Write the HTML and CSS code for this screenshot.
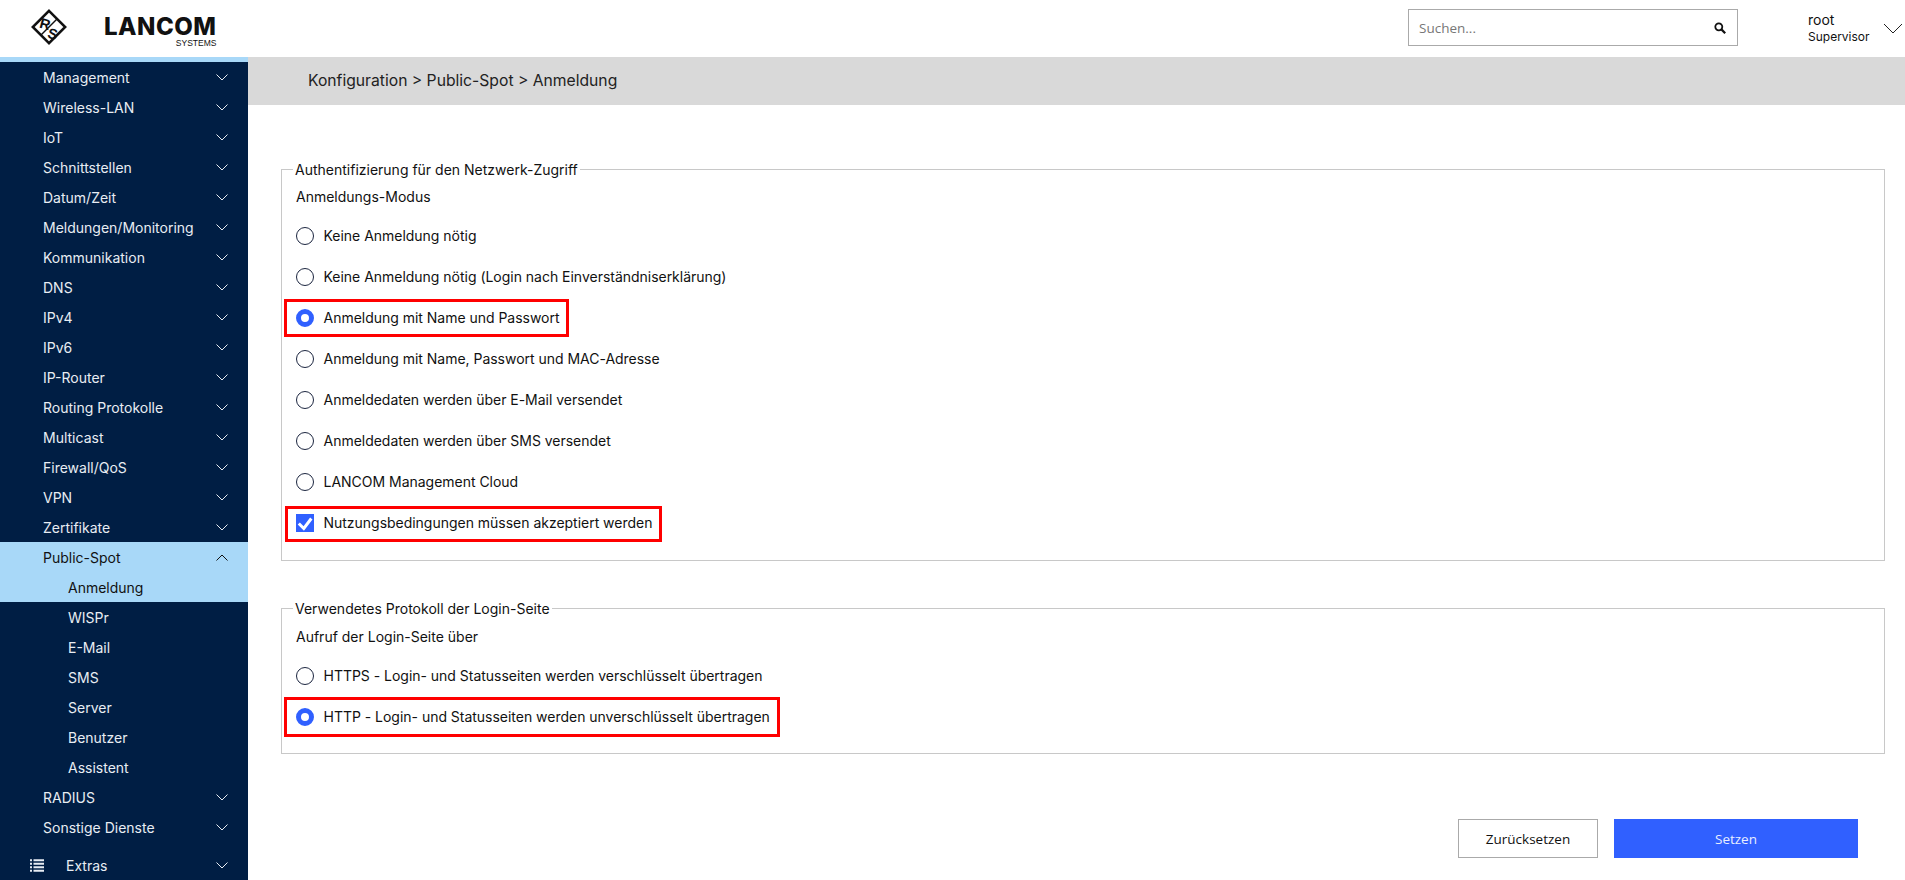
FILE: index.html
```html
<!DOCTYPE html>
<html lang="de">
<head>
<meta charset="utf-8">
<title>Public-Spot Anmeldung</title>
<link rel="stylesheet" href="styles.css">
</head>
<body>
<header class="topbar">
  <div class="brand">
    <svg class="rs-logo" width="38" height="38" viewBox="0 0 38 38"><g fill="none" stroke="#111"><path d="M19 2.800 35.200 19 19 35.200 2.800 19Z" stroke-width="2.500"/><path d="M27.500 10.500 10.500 27.500" stroke-width="1.500"/></g><text x="9.800" y="21" class="rs-letter" transform="rotate(15 15 16)">R</text><text x="18" y="31" class="rs-letter" transform="rotate(15 23 25.500)">S</text></svg>
    <div class="lancom"><span class="lancom-name">LANCOM</span><span class="lancom-sub">SYSTEMS</span></div>
  </div>
  <div class="search"><span class="search-text">Suchen...</span>
    <svg width="12" height="12" viewBox="0 0 12 12"><circle cx="4.800" cy="4.800" r="3.500" fill="none" stroke="#111" stroke-width="1.800"/><path d="M7.400 7.400 11.200 11.200" stroke="#111" stroke-width="2.200"/></svg>
  </div>
  <div class="user">
    <div class="user-text"><div class="user-name">root</div><div class="user-role">Supervisor</div></div>
    <svg width="20" height="11" viewBox="0 0 20 11"><path d="M1 1 10 10 19 1" fill="none" stroke="#222" stroke-width="1"/></svg>
  </div>
</header>
<div class="layout">
  <nav class="sidebar">
    <div class="nav-list">
      <div class="nav-item">Management<svg class="chev" viewBox="0 0 12 7"><path d="M.5.5 6 6 11.500.5"/></svg></div>
      <div class="nav-item">Wireless-LAN<svg class="chev" viewBox="0 0 12 7"><path d="M.5.5 6 6 11.500.5"/></svg></div>
      <div class="nav-item">IoT<svg class="chev" viewBox="0 0 12 7"><path d="M.5.5 6 6 11.500.5"/></svg></div>
      <div class="nav-item">Schnittstellen<svg class="chev" viewBox="0 0 12 7"><path d="M.5.5 6 6 11.500.5"/></svg></div>
      <div class="nav-item">Datum/Zeit<svg class="chev" viewBox="0 0 12 7"><path d="M.5.5 6 6 11.500.5"/></svg></div>
      <div class="nav-item">Meldungen/Monitoring<svg class="chev" viewBox="0 0 12 7"><path d="M.5.5 6 6 11.500.5"/></svg></div>
      <div class="nav-item">Kommunikation<svg class="chev" viewBox="0 0 12 7"><path d="M.5.5 6 6 11.500.5"/></svg></div>
      <div class="nav-item">DNS<svg class="chev" viewBox="0 0 12 7"><path d="M.5.5 6 6 11.500.5"/></svg></div>
      <div class="nav-item">IPv4<svg class="chev" viewBox="0 0 12 7"><path d="M.5.5 6 6 11.500.5"/></svg></div>
      <div class="nav-item">IPv6<svg class="chev" viewBox="0 0 12 7"><path d="M.5.5 6 6 11.500.5"/></svg></div>
      <div class="nav-item">IP-Router<svg class="chev" viewBox="0 0 12 7"><path d="M.5.5 6 6 11.500.5"/></svg></div>
      <div class="nav-item">Routing Protokolle<svg class="chev" viewBox="0 0 12 7"><path d="M.5.5 6 6 11.500.5"/></svg></div>
      <div class="nav-item">Multicast<svg class="chev" viewBox="0 0 12 7"><path d="M.5.5 6 6 11.500.5"/></svg></div>
      <div class="nav-item">Firewall/QoS<svg class="chev" viewBox="0 0 12 7"><path d="M.5.5 6 6 11.500.5"/></svg></div>
      <div class="nav-item">VPN<svg class="chev" viewBox="0 0 12 7"><path d="M.5.5 6 6 11.500.5"/></svg></div>
      <div class="nav-item">Zertifikate<svg class="chev" viewBox="0 0 12 7"><path d="M.5.5 6 6 11.500.5"/></svg></div>
      <div class="nav-item active">Public-Spot<svg class="chev" viewBox="0 0 12 7"><path d="M.5 6.500 6 1 11.500 6.500"/></svg></div>
      <div class="nav-item sub active">Anmeldung</div>
      <div class="nav-item sub">WISPr</div>
      <div class="nav-item sub">E-Mail</div>
      <div class="nav-item sub">SMS</div>
      <div class="nav-item sub">Server</div>
      <div class="nav-item sub">Benutzer</div>
      <div class="nav-item sub">Assistent</div>
      <div class="nav-item">RADIUS<svg class="chev" viewBox="0 0 12 7"><path d="M.5.5 6 6 11.500.5"/></svg></div>
      <div class="nav-item">Sonstige Dienste<svg class="chev" viewBox="0 0 12 7"><path d="M.5.5 6 6 11.500.5"/></svg></div>
    </div>
    <div class="nav-extras">
      <svg class="list-icon" width="14" height="13" viewBox="0 0 14 13"><path d="M0 1.200H2M3.500 1.200H14M0 4.700H2M3.500 4.700H14M0 8.200H2M3.500 8.200H14M0 11.700H2M3.500 11.700H14" stroke="#e8edf3" stroke-width="1.900"/></svg>
      <span class="extras-label">Extras</span><svg class="chev" viewBox="0 0 12 7"><path d="M.5.5 6 6 11.500.5"/></svg>
    </div>
  </nav>
  <main class="content">
    <div class="crumb">Konfiguration &gt; Public-Spot &gt; Anmeldung</div>
    <div class="form">
      <fieldset class="group group-auth">
        <legend>Authentifizierung für den Netzwerk-Zugriff</legend>
        <div class="field-title">Anmeldungs-Modus</div>
        <div class="opt"><span class="radio"></span>Keine Anmeldung nötig</div>
        <div class="opt"><span class="radio"></span>Keine Anmeldung nötig (Login nach Einverständniserklärung)</div>
        <div class="opt"><span class="radio on"></span>Anmeldung mit Name und Passwort<span class="mark mark-a"></span></div>
        <div class="opt"><span class="radio"></span>Anmeldung mit Name, Passwort und MAC-Adresse</div>
        <div class="opt"><span class="radio"></span>Anmeldedaten werden über E-Mail versendet</div>
        <div class="opt"><span class="radio"></span>Anmeldedaten werden über SMS versendet</div>
        <div class="opt"><span class="radio"></span>LANCOM Management Cloud</div>
        <div class="opt"><span class="check"><svg width="18" height="18" viewBox="0 0 18 18"><path d="M2.800 9.500 7.800 14.500 15.300 4.500" fill="none" stroke="#fff" stroke-width="3"/></svg></span>Nutzungsbedingungen müssen akzeptiert werden<span class="mark mark-b"></span></div>
      </fieldset>
      <fieldset class="group group-proto">
        <legend>Verwendetes Protokoll der Login-Seite</legend>
        <div class="field-title">Aufruf der Login-Seite über</div>
        <div class="opt"><span class="radio"></span>HTTPS - Login- und Statusseiten werden verschlüsselt übertragen</div>
        <div class="opt"><span class="radio on"></span>HTTP - Login- und Statusseiten werden unverschlüsselt übertragen<span class="mark mark-c"></span></div>
      </fieldset>
      <div class="actions">
        <button class="btn btn-reset">Zurücksetzen</button>
        <button class="btn btn-set">Setzen</button>
      </div>
    </div>
  </main>
</div>
</body>
</html>
```
FILE: styles.css
```css
* { box-sizing: border-box; }
html, body { margin: 0; height: 100%; overflow: hidden; }
body { font-family: Inter, "Liberation Sans", sans-serif; font-size: 14px; color: #111; background: #fff; }
.topbar { height: 57px; display: flex; align-items: center; }
.brand { width: 248px; display: flex; align-items: center; padding-left: 30px; flex: none; }
.rs-logo { flex: none; margin-top: -3px; }
.rs-letter { font: 700 14.500px "Liberation Sans", sans-serif; fill: #111; }
.lancom { display: flex; flex-direction: column; align-items: flex-end; margin-left: 36px; margin-top: 6px; }
.lancom-name { font: 800 24px/20px Inter, "Liberation Sans", sans-serif; letter-spacing: .5px; color: #111; }
.lancom-sub { font: 400 8.500px/8px "Liberation Sans", sans-serif; color: #111; margin-top: 2px; }
.search { margin-left: 1160px; width: 330px; height: 37px; border: 1px solid #aaa; display: flex; align-items: center; justify-content: space-between; padding: 0 11px 0 10px; margin-top: -2px; }
.search-text { font: 13.500px "Open Sans", sans-serif; color: #777; }
.user { margin-left: 70px; display: flex; align-items: center; gap: 13px; margin-top: -1px; }
.user-name { font-size: 14px; line-height: 17px; }
.user-role { font-size: 12px; line-height: 17px; }
.layout { display: flex; height: 823px; }
.sidebar { width: 248px; flex: none; background: #001e44; border-top: 5px solid #a8d8f8; color: #e8edf3; }
.nav-item { height: 30px; display: flex; align-items: center; justify-content: space-between; padding: 0 20px 0 43px; font-size: 14px; }
.nav-item.sub { padding-left: 68px; }
.nav-item.active { background: #a8d8f8; color: #111; }
.chev { width: 12px; height: 7px; fill: none; stroke: currentColor; stroke-width: 1; }
.nav-extras { display: flex; align-items: center; height: 30px; margin-top: 8px; padding: 0 20px 0 30px; font-size: 14px; }
.extras-label { margin-left: 22px; flex: 1; }
.content { flex: 1; min-width: 0; }
.crumb { height: 48px; background: #d9d9d9; padding: 0 0 2px 60px; display: flex; align-items: center; font-size: 15.700px; color: #222; }
.form { padding: 56px 20px 0 33px; }
.group { position: relative; margin: 0; padding: 0 14px; border: 1px solid #c8c8c8; min-width: 0; }
.group-auth { height: 400px; }
.group-proto { height: 154px; margin-top: 39px; }
legend { padding: 0 2px; margin-left: -3px; font-size: 14px; line-height: 17px; }
.field-title { height: 27px; line-height: 27px; margin-top: 6px; margin-bottom: 5px; }
.group-auth .field-title { margin-top: 5px; }
.opt { position: relative; height: 41px; display: flex; align-items: center; gap: 9.500px; letter-spacing: -.02px; }
.radio { width: 18px; height: 18px; border-radius: 50%; border: 1.500px solid #1c2640; flex: none; }
.radio.on { border: 5px solid #3060ff; background: #fff; }
.check { width: 18px; height: 18px; background: #3060ff; flex: none; display: block; line-height: 0; }
.mark { position: absolute; border: 3px solid #f00; }
.mark-a { left: -12px; top: 2px; width: 285px; height: 38px; }
.mark-b { left: -11px; top: 4px; width: 377px; height: 36px; }
.mark-c { left: -12px; top: 1px; width: 496px; height: 40px; }
.actions { display: flex; justify-content: flex-end; gap: 16px; margin-top: 65px; padding-right: 27px; }
.btn { height: 39px; font: 13.500px "Open Sans", sans-serif; border: 0; padding: 0; }
.btn-reset { width: 140px; background: #fff; border: 1px solid #aaa; color: #111; }
.btn-set { width: 244px; background: #3060ff; color: #e8eeff; }
```
